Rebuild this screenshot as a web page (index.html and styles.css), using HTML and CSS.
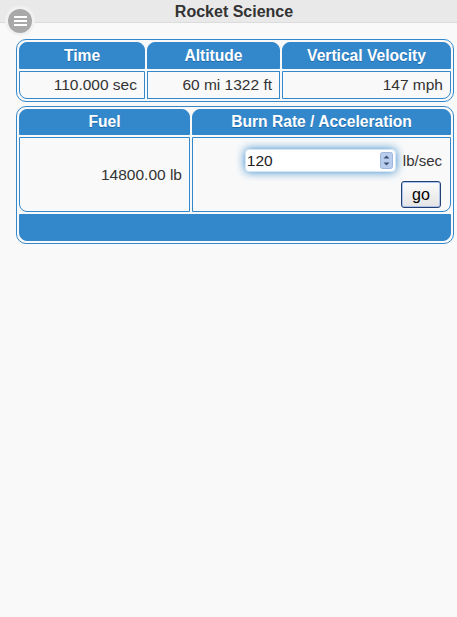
FILE: index.html
```html
<!DOCTYPE html>
<html>
<head>
<meta charset="utf-8">
<title>Rocket Science</title>
<link rel="stylesheet" href="styles.css">
</head>
<body>
<div class="hdr">
  <h1 class="title">Rocket Science</h1>
  <a class="menu-btn" href="#"><span class="bar"></span><span class="bar"></span><span class="bar"></span></a>
</div>
<div class="content">
  <table class="panel panel-stats">
    <tr><th class="c-time">Time</th><th class="c-alt">Altitude</th><th class="c-vel">Vertical Velocity</th></tr>
    <tr><td class="first">110.000 sec</td><td>60 mi 1322 ft</td><td class="last">147 mph</td></tr>
  </table>
  <table class="panel panel-ctrl">
    <tr><th class="c-fuel">Fuel</th><th class="c-burn">Burn Rate / Acceleration</th></tr>
    <tr>
      <td class="first fuel">14800.00 lb</td>
      <td class="last burn">
        <div class="burn-row">
          <div class="num-field">
            <input class="num-input" type="text" value="120">
            <svg class="spin" width="13" height="17" viewBox="0 0 13 17">
              <rect x="0.5" y="0.5" width="12" height="16" rx="2" fill="#b9cdee" stroke="#9fb6dc"/>
              <path d="M3.5 6.5 L6.5 3.5 L9.5 6.5 Z" fill="#3f4f6e"/>
              <path d="M3.5 10.5 L6.5 13.5 L9.5 10.5 Z" fill="#3f4f6e"/>
            </svg>
          </div>
          <span class="unit">lb/sec</span>
        </div>
        <div class="go-row"><button class="go-btn">go</button></div>
      </td>
    </tr>
    <tr><td colspan="2" class="footer">&nbsp;</td></tr>
  </table>
</div>
</body>
</html>
```
FILE: styles.css
```css
html, body {
  margin: 0;
  padding: 0;
  background: #f9f9f9;
  font-family: "Liberation Sans", Arial, sans-serif;
  color: #333;
}

.hdr {
  position: relative;
  height: 22px;
  background: #e9e9e9;
  border-bottom: 1px solid #dcdcdc;
}

.title {
  margin: 0;
  padding-left: 11px;
  font-size: 16px;
  font-weight: bold;
  line-height: 24px;
  height: 22px;
  text-align: center;
  color: #333;
}

.menu-btn {
  position: absolute;
  left: 8px;
  top: 9px;
  width: 24px;
  height: 24px;
  border-radius: 50%;
  background: #a9a9a9;
  box-shadow: 0 0 0 3px #f1f1f1;
  display: flex;
  flex-direction: column;
  align-items: center;
  justify-content: center;
  gap: 2px;
}

.menu-btn .bar {
  display: block;
  width: 13px;
  height: 2px;
  background: #fff;
}

.content {
  padding: 16px 0 0 16px;
}

.panel {
  width: 438px;
  table-layout: fixed;
  border-collapse: separate;
  border-spacing: 2px;
  border: 1px solid #3388cc;
  border-radius: 10px;
}

.panel-ctrl {
  margin-top: 4px;
}

.panel th {
  box-sizing: border-box;
  background: #3388cc;
  border: 1px solid #3388cc;
  border-radius: 8px 8px 0 0;
  color: #fff;
  font-size: 15.6px;
  font-weight: bold;
  line-height: 25px;
  padding: 0;
  text-align: center;
  text-shadow: 0 1px 0 #1f6aa8;
}

.panel-ctrl th {
  line-height: 24px;
}

.c-time { width: 126px; }
.c-alt { width: 133px; }
.c-fuel { width: 171px; }

.panel td {
  box-sizing: border-box;
  border: 1px solid #3388cc;
  padding: 0 7px;
  text-align: right;
  font-size: 15.5px;
  line-height: 26px;
  color: #333;
}

.panel td.first { border-bottom-left-radius: 8px; }
.panel td.last { border-bottom-right-radius: 8px; }

.panel td.fuel {
  vertical-align: middle;
}

.panel td.burn {
  vertical-align: top;
  padding: 11px 8px 3px 8px;
  line-height: normal;
}

.burn-row {
  display: flex;
  justify-content: flex-end;
  align-items: center;
  gap: 7px;
}

.num-field {
  box-sizing: border-box;
  width: 151px;
  height: 23px;
  display: flex;
  align-items: center;
  background: #fff;
  border: 1px solid #d6e6f4;
  border-radius: 4px;
  box-shadow: 0 0 10px #3388cc;
}

.num-input {
  flex: 1;
  min-width: 0;
  border: none;
  outline: none;
  background: transparent;
  padding: 0 0 0 1px;
  margin: 0;
  font-family: "Liberation Sans", Arial, sans-serif;
  font-size: 15.5px;
  color: #222;
}

.spin {
  display: block;
  margin-right: 2px;
}

.unit {
  font-size: 15px;
  color: #333;
}

.go-row {
  display: flex;
  justify-content: flex-end;
  margin-top: 9px;
}

.go-btn {
  box-sizing: border-box;
  width: 40px;
  height: 27px;
  margin: 0 1px 0 0;
  padding: 0;
  border: 1px solid #233f73;
  border-radius: 3px;
  background: linear-gradient(#fbfbfb, #e4e4e4);
  box-shadow: inset 0 0 0 1px #a9c3ea;
  font-family: "Liberation Sans", Arial, sans-serif;
  font-size: 16px;
  color: #000;
}

.panel td.footer {
  background: #3388cc;
  border-radius: 0 0 8px 8px;
  line-height: 25px;
}
```
